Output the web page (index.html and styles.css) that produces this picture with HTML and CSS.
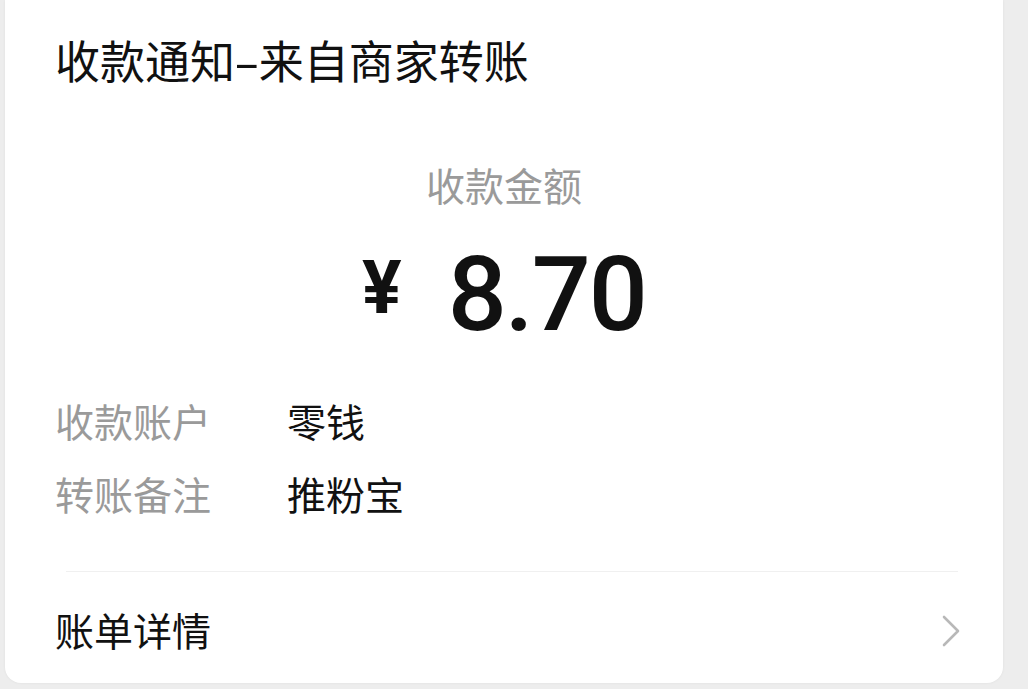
FILE: index.html
```html
<!DOCTYPE html>
<html lang="zh-CN">
<head>
<meta charset="utf-8">
<title>收款通知</title>
<link rel="stylesheet" href="styles.css">
</head>
<body>
<div class="card">
  <h1 class="title">收款通知<span class="dash">-</span>来自商家转账</h1>
  <div class="amount-label">收款金额</div>
  <div class="amount"><span class="yen">¥</span><span class="num">8.70</span></div>
  <div class="rows">
    <div class="row"><span class="label">收款账户</span><span class="value">零钱</span></div>
    <div class="row"><span class="label">转账备注</span><span class="value">推粉宝</span></div>
  </div>
  <div class="divider"></div>
  <div class="detail">
    <span class="detail-text">账单详情</span>
    <svg class="chevron" width="18" height="32" viewBox="0 0 18 32"><path d="M2 2 L16 16 L2 30" fill="none" stroke="#b8b8b8" stroke-width="2.6" stroke-linecap="round" stroke-linejoin="round"/></svg>
  </div>
</div>
</body>
</html>
```

FILE: styles.css
```css
html, body {
  margin: 0;
  padding: 0;
  background: #ededed;
}
body {
  width: 1028px;
  height: 689px;
  overflow: hidden;
  font-family: "Noto Sans CJK SC", "Noto Sans", sans-serif;
}
.card {
  margin-left: 5px;
  width: 998px;
  height: 683px;
  box-sizing: border-box;
  background: #fff;
  border-radius: 0 0 16px 16px;
  box-shadow: 0 0 3px rgba(0,0,0,0.06);
  padding: 38px 0 0 50px;
  display: flex;
  flex-direction: column;
}
.title {
  margin: 0;
  font-size: 45px;
  line-height: 44px;
  font-weight: 400;
  color: #111;
}
.dash {
  display: inline-block;
  margin: 0 4px 0 4px;
  transform: scaleX(1.7);
}
.amount-label {
  margin: 83px 0 0 -50px;
  text-align: center;
  font-size: 39px;
  line-height: 39px;
  color: #9a9a9a;
}
.amount {
  margin: 39px 0 0 -50px;
  display: flex;
  justify-content: center;
  align-items: flex-start;
  color: #111;
  font-family: Roboto, "Liberation Sans", sans-serif;
}
.yen {
  font-size: 74px;
  line-height: 74px;
  font-weight: 700;
  margin-top: 8px;
  margin-right: 46px;
}
.num {
  font-size: 104px;
  line-height: 104px;
  font-weight: 500;
  letter-spacing: -2px;
}
.rows {
  margin-top: 54px;
  display: flex;
  flex-direction: column;
  gap: 34px;
}
.row {
  display: flex;
  font-size: 39px;
  line-height: 39px;
}
.label {
  width: 232px;
  color: #9a9a9a;
}
.value {
  color: #111;
}
.divider {
  margin: 58px 45px 0 11px;
  height: 1px;
  background: #f0f0f0;
}
.detail {
  margin-top: 38px;
  display: flex;
  align-items: center;
  justify-content: space-between;
  padding-right: 43px;
}
.detail-text {
  font-size: 39px;
  line-height: 39px;
  color: #111;
}
.chevron {
  display: block;
  margin-top: 2px;
}
```
